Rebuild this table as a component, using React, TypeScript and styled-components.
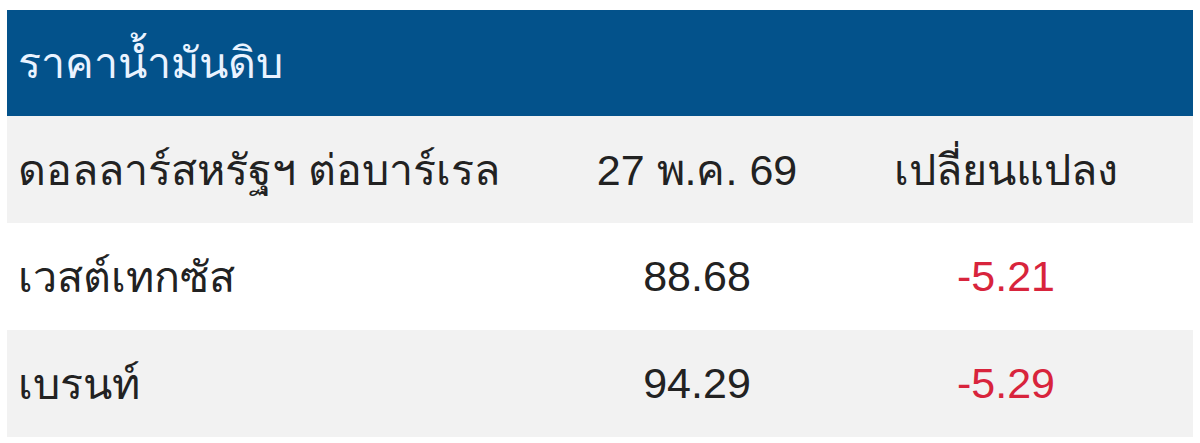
import styled, {createGlobalStyle} from "styled-components";

const GlobalStyle = createGlobalStyle`
	html, body {
		margin: 0;
		padding: 0;
		background: #ffffff;
	}
	body {
		font-family: "Liberation Sans", "Noto Sans", "DejaVu Sans", sans-serif;
	}
`;

const Frame = styled.div`
	padding: 10px 7px 6px 7px;
`;

const Title = styled.div`
	background: #03528b;
	color: #eaf3ff;
	height: 106px;
	display: flex;
	align-items: center;
	padding-left: 11px;
	font-size: 43px;
`;

const Table = styled.div`
	display: grid;
	grid-template-columns: 568px 244px 1fr;
`;

const Row = styled.div<{ $shade?: boolean }>`
	display: contents;

	> div {
		background: ${(p) => (p.$shade ? "#f2f2f2" : "#ffffff")};
	}
`;

const Cell = styled.div<{ $align?: "left" | "center"; $red?: boolean }>`
	height: 107px;
	display: flex;
	align-items: center;
	justify-content: ${(p) => (p.$align === "center" ? "center" : "flex-start")};
	padding-left: ${(p) => (p.$align === "center" ? "0" : "11px")};
	font-size: 43px;
	color: ${(p) => (p.$red ? "#d8243c" : "#222222")};
`;

const rows = [
	{name: "เวสต์เทกซัส", price: "88.68", change: "-5.21"},
	{name: "เบรนท์", price: "94.29", change: "-5.29"},
];

export default function App() {
	return (
		<>
			<GlobalStyle />
			<Frame>
				<Title>ราคาน้ำมันดิบ</Title>
				<Table>
					<Row $shade>
						<Cell>ดอลลาร์สหรัฐฯ ต่อบาร์เรล</Cell>
						<Cell $align="center">27 พ.ค. 69</Cell>
						<Cell $align="center">เปลี่ยนแปลง</Cell>
					</Row>
					{rows.map((r, i) => (
						<Row key={r.name} $shade={i % 2 === 1}>
							<Cell>{r.name}</Cell>
							<Cell $align="center">{r.price}</Cell>
							<Cell $align="center" $red>{r.change}</Cell>
						</Row>
					))}
				</Table>
			</Frame>
		</>
	);
}
